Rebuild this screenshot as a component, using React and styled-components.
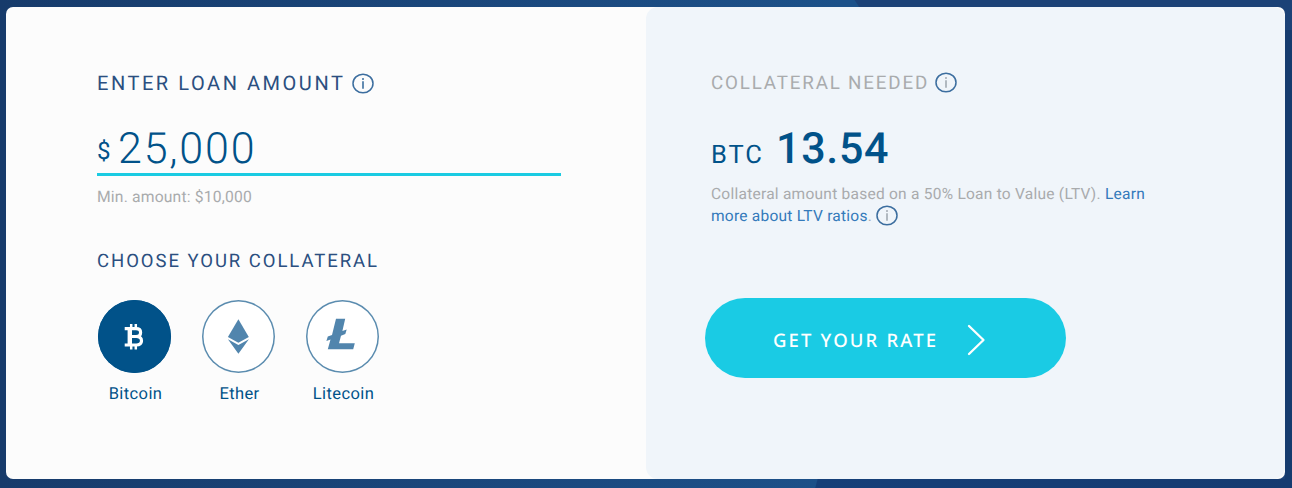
import React from 'react';
import styled, { createGlobalStyle } from 'styled-components';

const GlobalStyle = createGlobalStyle`
  *, *::before, *::after { box-sizing: border-box; }
  body {
    margin: 0;
    font-family: Roboto, "Liberation Sans", sans-serif;
    text-rendering: geometricPrecision;
  }
  button { font: inherit; text-rendering: inherit; }
`;

const Page = styled.main`
  width: 1292px;
  height: 488px;
  padding: 7px 7px 9px 6px;
  background:
    linear-gradient(57deg, transparent 6px, #1c4277 7px) top right / 440px 8px no-repeat,
    linear-gradient(105deg, transparent 2px, #153f78 3px, #153b70 100%) bottom right / 477px 9px no-repeat,
    linear-gradient(#153b6e, #153b6e) right 30px / 7px 458px no-repeat,
    linear-gradient(90deg, #173b6b 0%, #1b4a80 45%, #1c5189 65%, #1c5189 68%, #1c4277 100%);
`;

const Card = styled.section`
  display: flex;
  height: 472px;
  border-radius: 7px;
  background: #fcfcfc;
  overflow: hidden;
`;

const LoanPanel = styled.div`
  flex: 0 0 640px;
  padding: 64px 85px 0 91px;
`;

const ResultPanel = styled.div`
  flex: 1;
  padding: 64px 130px 0 65px;
  border-radius: 12px;
  background: #f0f5fa;
`;

const Heading = styled.h2`
  display: flex;
  align-items: center;
  margin: 0;
  height: 24px;
  font-size: ${(p) => p.$size}px;
  font-weight: 400;
  line-height: 24px;
  letter-spacing: ${(p) => p.$spacing}px;
  color: ${(p) => (p.$muted ? '#a9abad' : '#2b4f80')};
  white-space: nowrap;
`;

const InfoSvg = styled.svg`
  flex: none;
  width: 22px;
  height: 21px;
  margin-left: ${(p) => p.$gap}px;
  margin-bottom: ${(p) => p.$lift || 0}px;
  vertical-align: -5px;
`;

const AmountField = styled.div`
  display: flex;
  height: 54px;
  margin-top: 27px;
  border-bottom: 3px solid #1acbe2;
  color: #015289;
`;

const Dollar = styled.span`
  width: 21px;
  font-size: 24px;
  line-height: 59px;
`;

const Amount = styled.span`
  font-size: 43px;
  font-weight: 300;
  line-height: 55px;
  letter-spacing: 1.8px;
`;

const Hint = styled.p`
  margin: 11px 0 0;
  font-size: 15.7px;
  line-height: 20px;
  letter-spacing: 0.17px;
  color: #a9abad;
`;

const ChooseHeading = styled(Heading)`
  margin-top: 42px;
`;

const Coins = styled.div`
  display: flex;
  gap: 31px;
  margin: 26.5px 0 0 1px;
`;

const Coin = styled.div`
  display: flex;
  flex-direction: column;
  align-items: center;
  width: 73px;
  color: #015289;
  font-size: 16.5px;
  line-height: 20px;
  letter-spacing: 0.4px;
`;

const CoinDisc = styled.div`
  width: 73px;
  height: 73px;
  margin-bottom: 12px;
  border-radius: 50%;
  background: ${(p) => (p.$active ? '#015289' : '#fff')};
  box-shadow: inset 0 0 0 1.5px ${(p) => (p.$active ? '#015289' : '#5b8caf')};
  color: ${(p) => (p.$active ? '#fff' : '#5185ad')};

  svg { display: block; width: 72px; height: 72px; }
`;

const CoinName = styled.span`
  padding-left: 2px;
`;

const Result = styled.div`
  display: flex;
  align-items: baseline;
  margin-top: 27px;
  height: 54px;
  line-height: 54px;
  color: #015289;
`;

const Currency = styled.span`
  width: 65px;
  font-size: 25.5px;
  letter-spacing: 1.9px;
`;

const ResultValue = styled.strong`
  font-size: 43px;
  font-weight: 500;
  letter-spacing: 0.7px;
`;

const Note = styled.p`
  margin: 8px 0 0;
  font-size: 15.5px;
  line-height: 21px;
  letter-spacing: 0.25px;
  color: #a9abad;
  white-space: nowrap;
`;

const NoteLink = styled.span`
  color: #347abb;
`;

const RateButton = styled.button`
  display: flex;
  align-items: center;
  width: 361px;
  height: 80px;
  margin: 71px 0 0 -6px;
  padding: 4px 0 0 68px;
  border: 0;
  border-radius: 40px;
  background: #1acbe4;
  color: #fff;
  font-family: "Noto Sans", "Open Sans", sans-serif;
  font-size: 18.5px;
  font-weight: 500;
  letter-spacing: 2.15px;
  white-space: nowrap;

  svg { width: 20px; height: 32px; margin-left: 28px; }
`;

function InfoIcon({ gap, lift, tone = '#2f6699' }) {
  return (
    <InfoSvg $gap={gap} $lift={lift} viewBox="0 0 22 21" fill="none">
      <ellipse cx="11" cy="10.5" rx="10" ry="9.3" stroke="#3c6e9f" strokeWidth="1.5" />
      <circle cx="11" cy="6" r="0.95" fill={tone} />
      <path d="M11 8.3V15.8" stroke={tone} strokeWidth="1.5" />
    </InfoSvg>
  );
}

function BitcoinIcon() {
  return (
    <svg viewBox="0 0 72 72" fill="none" stroke="currentColor">
      <path d="M33.2 24V28.5M37.8 24V28.5M33.2 45V49.5M37.8 45V49.5" strokeWidth="2.5" />
      <path d="M26.7 28.7H38C41 28.7 42.6 30 42.6 32.4S41 36.5 38 36.5H32M38.2 36.5C41.8 36.5 43.5 38 43.5 40.8S41.8 45 38.2 45H26.7" strokeWidth="3.2" />
      <path d="M31.8 29V45" strokeWidth="4.4" />
    </svg>
  );
}

function EtherIcon() {
  return (
    <svg viewBox="0 0 72 72" fill="currentColor">
      <path d="M36.4 19.2 46.8 37 36.4 42.8 25.9 37Z" />
      <path d="M25.9 39.2 36.4 45 46.9 39.2 36.4 53.7Z" />
    </svg>
  );
}

function LitecoinIcon() {
  return (
    <svg viewBox="0 0 72 72" fill="currentColor">
      <path d="M30 18.8H39.2L36.4 31L40.7 29.5L39.3 34L35 35.7L33 43.2H48.8L47.2 49.3H21.8L24.5 39.6L20.4 41.1L21.8 36.5L26 35Z" />
    </svg>
  );
}

const COINS = [
  { name: 'Bitcoin', Icon: BitcoinIcon, active: true },
  { name: 'Ether', Icon: EtherIcon },
  { name: 'Litecoin', Icon: LitecoinIcon },
];

export default function App() {
  return (
    <>
      <GlobalStyle />
      <Page>
        <Card>
          <LoanPanel>
            <Heading $size={20} $spacing={2.55}>
              ENTER LOAN AMOUNT
              <InfoIcon gap={7} />
            </Heading>
            <AmountField>
              <Dollar>$</Dollar>
              <Amount>25,000</Amount>
            </AmountField>
            <Hint>Min. amount: $10,000</Hint>
            <ChooseHeading $size={18.5} $spacing={1.95}>
              CHOOSE YOUR COLLATERAL
            </ChooseHeading>
            <Coins>
              {COINS.map(({ name, Icon, active }) => (
                <Coin key={name}>
                  <CoinDisc $active={active}>
                    <Icon />
                  </CoinDisc>
                  <CoinName>{name}</CoinName>
                </Coin>
              ))}
            </Coins>
          </LoanPanel>
          <ResultPanel>
            <Heading $size={18.8} $spacing={1.82} $muted>
              COLLATERAL NEEDED
              <InfoIcon gap={6} lift={1} tone="#9da5ad" />
            </Heading>
            <Result>
              <Currency>BTC</Currency>
              <ResultValue>13.54</ResultValue>
            </Result>
            <Note>
              Collateral amount based on a 50% Loan to Value (LTV). <NoteLink>Learn</NoteLink>
              <br />
              <NoteLink>more about LTV ratios</NoteLink>.
              <InfoIcon gap={4} tone="#9da5ad" />
            </Note>
            <RateButton type="button">
              GET YOUR RATE
              <svg viewBox="0 0 20 32" fill="none" stroke="currentColor" strokeWidth="2.3" strokeLinecap="round" strokeLinejoin="round">
                <path d="M3 2 17.5 16 3 30" />
              </svg>
            </RateButton>
          </ResultPanel>
        </Card>
      </Page>
    </>
  );
}
